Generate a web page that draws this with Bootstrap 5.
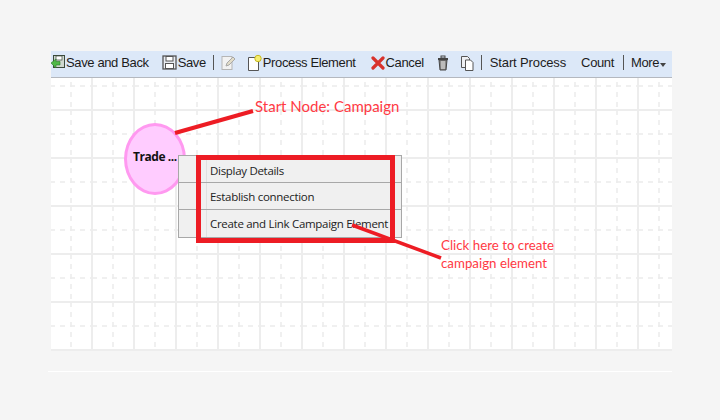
<!DOCTYPE html>
<html lang="en">
<head>
<meta charset="utf-8">
<title>Process canvas</title>
<link href="https://cdn.jsdelivr.net/npm/bootstrap@5.3.0/dist/css/bootstrap.min.css" rel="stylesheet">
<style>
html,body{width:720px;height:420px;overflow:hidden;background:#f5f5f5;margin:0}
.shot{padding:51px 48px 0 51px;height:420px}
.tbar{height:27px;padding-bottom:3px;background:#dce8f8;border-bottom:1px solid #b4b8bf;font-family:"Liberation Sans",Arial,sans-serif;font-size:13px;color:#1c1c1c;white-space:nowrap;letter-spacing:-.37px}
.tbar svg{flex:none;display:block}
.gap1{margin-left:1px}.gap7{margin-left:7px}.gap8{margin-left:8px}.gap9{margin-left:9px}.gap11{margin-left:11px}.gap13{margin-left:13px}.gap15{margin-left:15px}
.wide-label{letter-spacing:-.13px}
.tsep{width:1px;height:15px;background:#555;flex:none}
.caret-mini{width:0;height:0;border-left:3px solid transparent;border-right:3px solid transparent;border-top:4px solid #444;margin:4px 0 0 1px}
.sheet{height:273px}
.canvas-layer{position:absolute;left:0;top:0}
.startnode{position:absolute;left:73px;top:45px;width:62px;height:72px;border-radius:50%;background:#ffccff;border:3px solid #ff99f0;font:700 12px "Open Sans",sans-serif;color:#111;padding:0 0 4px 6px;letter-spacing:-.45px;line-height:1}
.ctxmenu{position:absolute;left:127px;top:77px;width:224px;height:83px;background:#f0f0f0;border:1px solid #a8a8a8;border-radius:0;font:11.500px "Open Sans",sans-serif;color:#222}
.ctxmenu::before{content:"";position:absolute;left:27px;top:0;bottom:0;width:1px;background:#e0e0e0}
.ctxmenu .list-group-item{background:transparent;border:0;border-bottom:1px solid #a8a8a8;height:27px;padding:2px 0 0 31px;margin:0;line-height:26px;border-radius:0;color:#222;letter-spacing:-.3px;white-space:nowrap}
.ctxmenu .list-group-item + .list-group-item{padding-top:1px}
.ctxmenu .list-group-item:last-child{border-bottom:0}
.redbox{position:absolute;left:145px;top:77px;width:199px;height:88px;border:5px solid #ed1c24}
.note{position:absolute;font-family:Lato,sans-serif;color:#ff3a44;white-space:nowrap}
.note-a{left:204px;top:18px;font-size:15px;line-height:20px}
.note-b{left:390px;top:158px;font-size:13.300px;line-height:18px}
.footline{margin:20px 0 0 -3px}
</style>
</head>
<body>
<div class="shot">
  <div class="tbar d-flex align-items-center">
    <svg width="15" height="17" viewBox="0 0 15 17" aria-hidden="true"><rect x="2.500" y="1.500" width="11" height="12" fill="#cfd8d0" stroke="#3c4a3c"/><rect x="5" y="2" width="6" height="4" fill="#fff" stroke="#3c4a3c" stroke-width=".7"/><path d="M0 9l5-4v2.500h4v3.500H5V14z" fill="#4fb848" stroke="#2c7a2a" stroke-width=".6"/></svg>
    <span>Save and Back</span>
    <svg class="gap13" width="15" height="15" viewBox="0 0 15 15" aria-hidden="true"><rect x="1" y="1" width="13" height="13" fill="#e8ecf2" stroke="#555" stroke-width="1.300"/><rect x="4" y="1.500" width="7" height="4.500" fill="#fff" stroke="#555"/><rect x="3.500" y="8.500" width="8" height="5" fill="#fff" stroke="#555"/></svg>
    <span class="gap1">Save</span>
    <div class="tsep gap7"></div>
    <svg class="gap7" width="15" height="16" viewBox="0 0 15 16" aria-hidden="true"><rect x="1" y="1.500" width="10" height="13" fill="#f2f2f2" stroke="#b5b5b5"/><path d="M5 11l1-3 6-6 2 2-6 6z" fill="#e2dcc8" stroke="#a8a8a8"/></svg>
    <svg class="gap11" width="16" height="18" viewBox="0 0 16 18" aria-hidden="true"><path d="M1.500 3.500h7l3 3v10h-10z" fill="#fff" stroke="#555"/><circle cx="11" cy="4.500" r="3.200" fill="#f6ee70" stroke="#c6b820"/></svg>
    <span>Process Element</span>
    <svg class="gap15" width="14" height="14" viewBox="0 0 14 14" aria-hidden="true"><path d="M2 2l10 10M12 2L2 12" stroke="#d8322c" stroke-width="3.200" stroke-linecap="round"/></svg>
    <span class="gap1">Cancel</span>
    <svg class="gap13" width="12" height="16" viewBox="0 0 12 16" aria-hidden="true"><rect x="4" y="1" width="4" height="2" fill="none" stroke="#444"/><rect x="1" y="3" width="10" height="2" fill="#444"/><path d="M2 5h8l-1 10H3z" fill="#8a8a8a" stroke="#444"/><path d="M5 6v8M7 6v8" stroke="#eee"/></svg>
    <svg class="gap11" width="14" height="16" viewBox="0 0 14 16" aria-hidden="true"><path d="M1.500 1.500h6l2 2v9h-8z" fill="#eef0f4" stroke="#555"/><path d="M5.500 5h5l2.500 2.500v8h-7.500z" fill="#fff" stroke="#555"/></svg>
    <div class="tsep gap7"></div>
    <span class="gap8 wide-label">Start Process</span>
    <span class="gap15">Count</span>
    <div class="tsep gap9"></div>
    <span class="gap7">More</span>
    <div class="caret-mini"></div>
  </div>
  <div class="sheet position-relative">
    <svg class="canvas-layer" width="621" height="273" aria-hidden="true">
      <defs>
        <pattern id="gridcell" width="42" height="48" patternUnits="userSpaceOnUse" x="-1" y="-16">
          <path d="M21 0V48" stroke="#ececec" stroke-width="1.500" stroke-dasharray="5 5"/>
          <path d="M0 24H42" stroke="#ececec" stroke-width="1.500" stroke-dasharray="5 5"/>
          <path d="M42 0V48M0 0V48" stroke="#ededed" stroke-width="2"/>
          <path d="M0 0H42M0 48H42" stroke="#ededed" stroke-width="2"/>
        </pattern>
      </defs>
      <rect width="621" height="273" fill="#fff"/>
      <rect width="621" height="273" fill="url(#gridcell)"/>
    </svg>
    <div class="startnode d-flex align-items-center">Trade ...</div>
    <div class="ctxmenu list-group">
      <div class="list-group-item">Display Details</div>
      <div class="list-group-item">Establish connection</div>
      <div class="list-group-item">Create and Link Campaign Element</div>
    </div>
    <div class="redbox"></div>
    <svg class="canvas-layer" width="621" height="273" aria-hidden="true">
      <path d="M124 55L202 33" stroke="#ed1c24" stroke-width="4"/>
      <path d="M301 147L390 180" stroke="#ed1c24" stroke-width="3.500"/>
    </svg>
    <div class="note note-a">Start Node: Campaign</div>
    <div class="note note-b">Click here to create<br>campaign element</div>
  </div>
  <div class="border-top border-white footline"></div>
</div>
<script src="https://cdn.jsdelivr.net/npm/bootstrap@5.3.0/dist/js/bootstrap.bundle.min.js"></script>
</body>
</html>
